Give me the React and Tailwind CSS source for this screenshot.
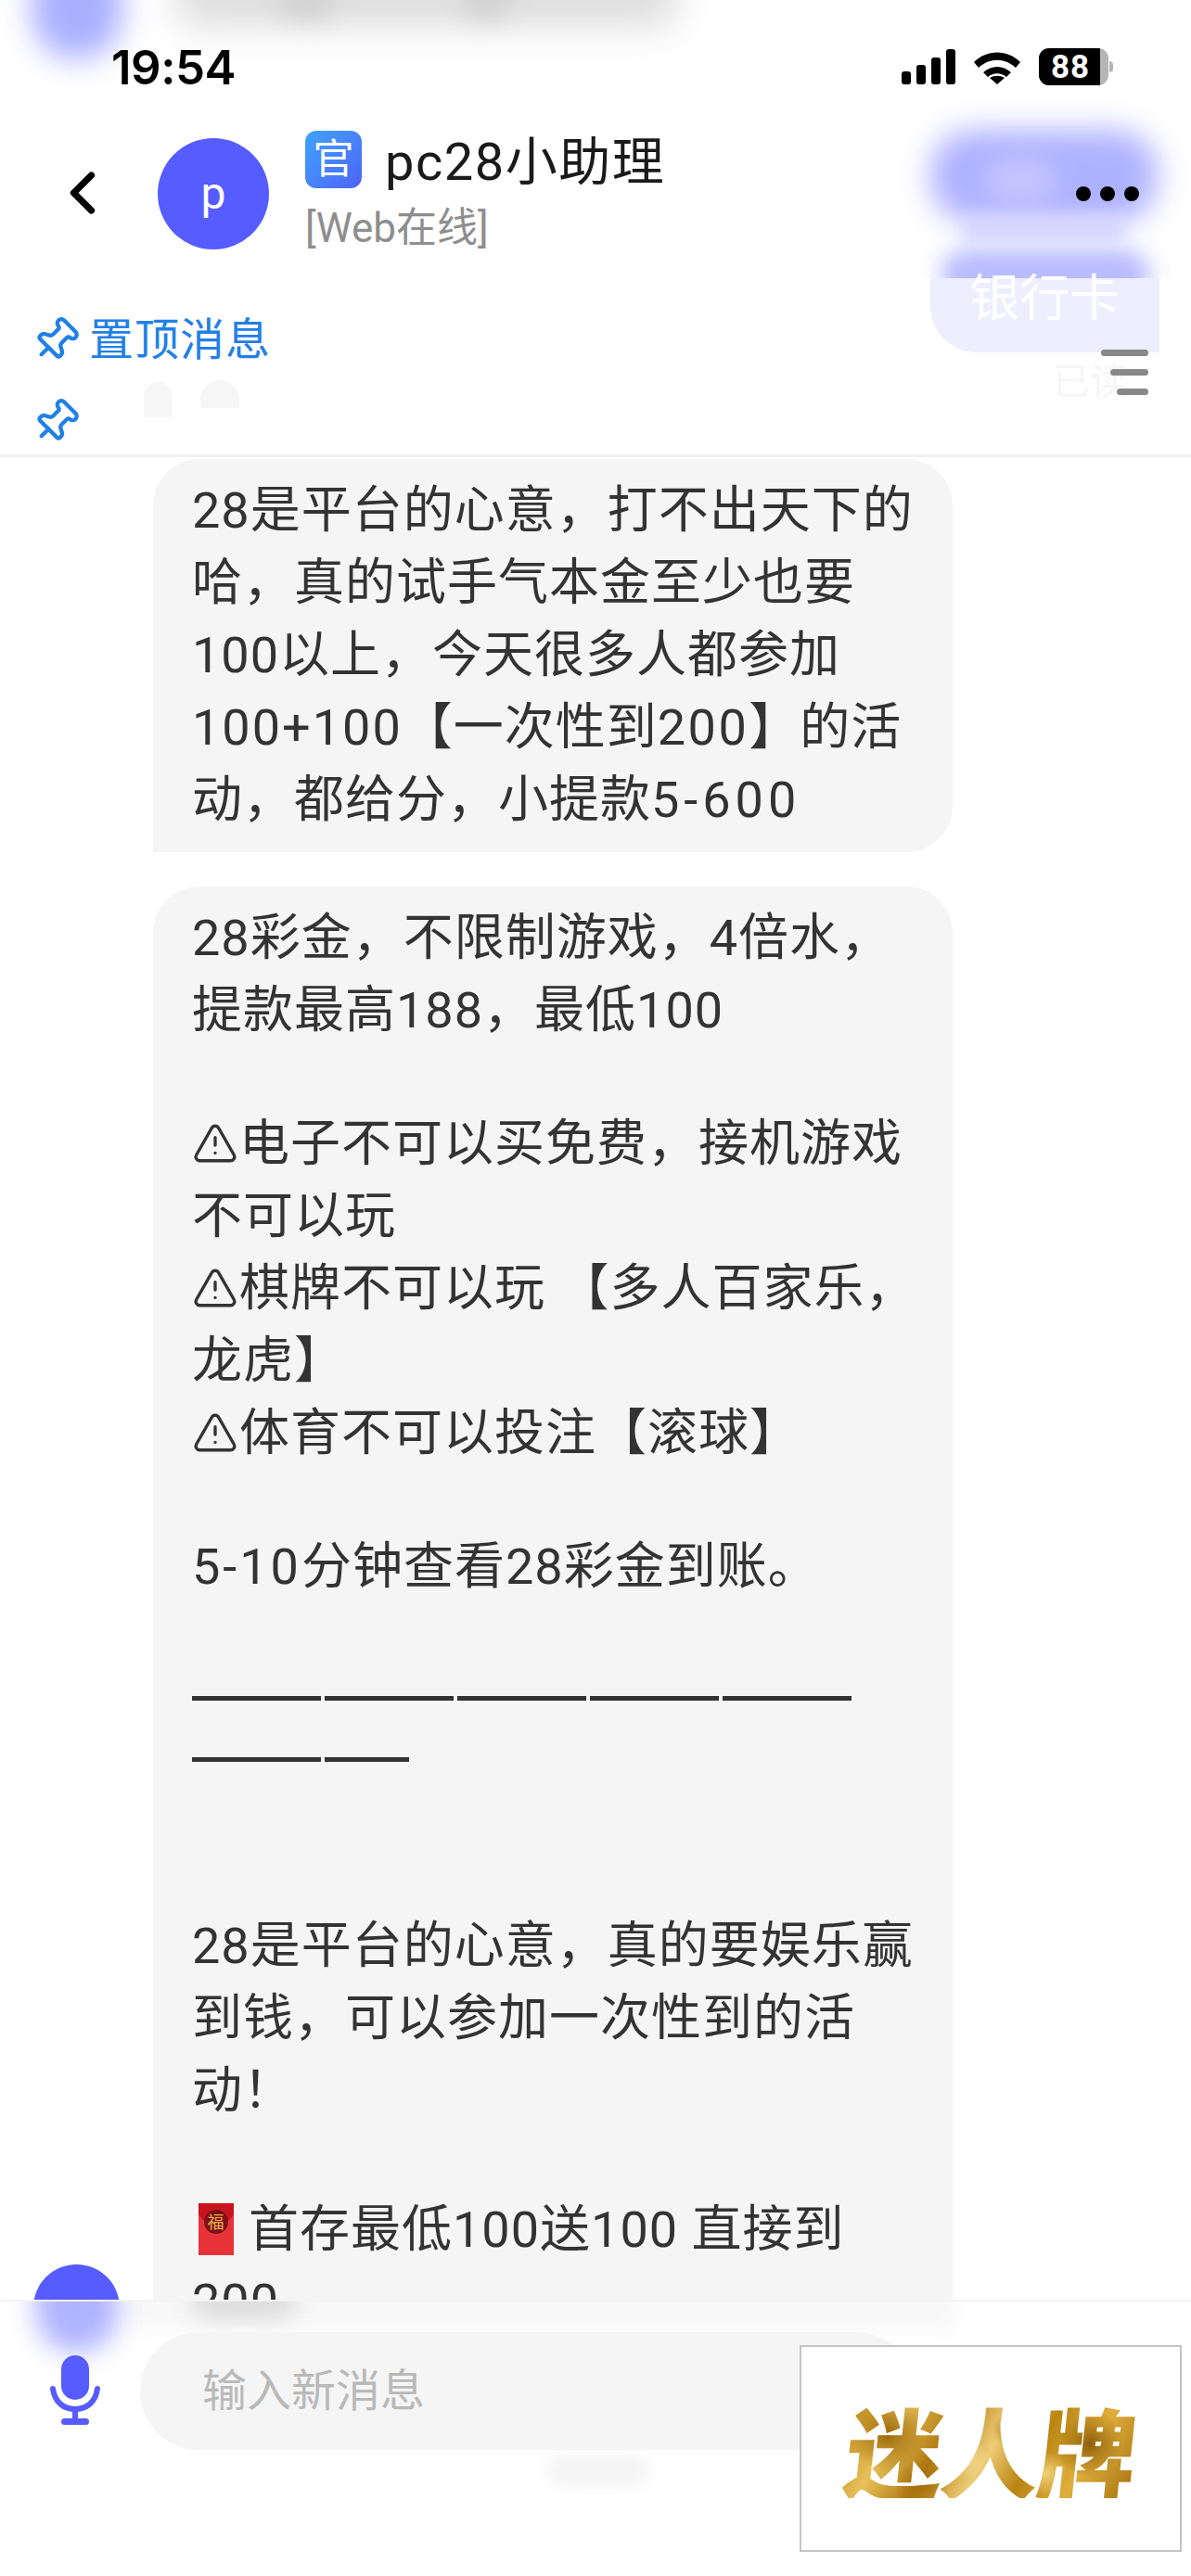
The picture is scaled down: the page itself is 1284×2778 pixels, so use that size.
import React from 'react'
import { ChevronLeft, Pin, TriangleAlert } from 'lucide-react'

const Warning = () => (
    <TriangleAlert size={50} strokeWidth={1.6} className="inline-block align-[-6px] text-[#333] mr-[1px]" />
)

const DashRow = ({ widths, className }) => (
    <div className={`flex items-center gap-[4px] h-[66px] ${className || ''}`}>
        {widths.map((w, i) => (
            <div key={i} className="h-[5px] bg-[#333]" style={{ width: w }} />
        ))}
    </div>
)

const Envelope = () => (
    <svg width="38" height="56" viewBox="0 0 38 56" className="inline-block align-[-9px] mr-[16px] ml-[7px]">
        <rect x="0" y="0" width="38" height="56" fill="#e8323a" />
        <path d="M0 0h38v12c-6 9-13 12-19 12S6 21 0 12z" fill="#c9141f" />
        <circle cx="19" cy="20" r="13" fill="#7c1016" />
        <text x="19" y="27" fontSize="18" textAnchor="middle" fill="#e8b04a">福</text>
    </svg>
)

const SignalBars = () => (
    <div className="flex items-end gap-[6px] h-[38px]">
        <div className="w-[10px] h-[14px] rounded-[3px] bg-black" />
        <div className="w-[10px] h-[21px] rounded-[3px] bg-black" />
        <div className="w-[10px] h-[29px] rounded-[3px] bg-black" />
        <div className="w-[10px] h-[38px] rounded-[3px] bg-black" />
    </div>
)

const Wifi = () => (
    <svg width="50" height="38" viewBox="0 0 50 38">
        <path d="M0 14C14 0 36 0 50 14l-5 6C33 9 17 9 5 20z" fill="#000" />
        <path d="M10 25c9-8 21-8 30 0l-5 5c-6-5-14-5-20 0z" fill="#000" />
        <path d="M17 31c5-3 11-3 16 0l-8 7z" fill="#000" />
    </svg>
)

const Battery = () => (
    <div className="flex items-center gap-[1px]">
        <div className="relative w-[75px] h-[40px] rounded-[11px] bg-[#b5b5b5] overflow-hidden">
            <div className="w-[66px] h-full bg-black flex items-center justify-center text-white font-bold text-[35px] leading-none pl-[2px] tracking-[1px]">
                88
            </div>
        </div>
        <div className="w-[4px] h-[12px] rounded-r-full bg-[#b5b5b5]" />
    </div>
)

const Mic = () => (
    <svg width="56" height="76" viewBox="0 0 56 76">
        <rect x="12" y="0" width="30" height="48" rx="15" fill="#565cff" />
        <path d="M3 36c2 15 12 22 24 22s22-7 24-22" fill="none" stroke="#565cff" strokeWidth="6" strokeLinecap="round" />
        <rect x="24" y="58" width="6" height="12" fill="#565cff" />
        <rect x="12" y="68" width="30" height="7" rx="3.5" fill="#565cff" />
    </svg>
)

const App = () => {
    return (
        <div className="relative w-[1284px] h-[2778px] overflow-hidden bg-white flex flex-col font-['Roboto','Noto_Sans_CJK_SC',sans-serif]">
            <div className="relative h-[300px] shrink-0 overflow-hidden bg-white">
                <div className="absolute left-[34px] -top-[56px] w-[98px] h-[120px] rounded-full bg-[#aab0ff] blur-[16px]" />
                <div className="absolute left-[190px] -top-[34px] w-[540px] h-[62px] rounded-[20px] bg-[#dcdcdc] blur-[20px]" />
                <div className="absolute left-[300px] -top-[20px] w-[60px] h-[40px] rounded-full bg-[#d2d2d2] blur-[12px]" />
                <div className="absolute left-[500px] -top-[20px] w-[50px] h-[40px] rounded-full bg-[#d2d2d2] blur-[12px]" />
                <div className="absolute left-[1003px] top-[140px] w-[245px] h-[100px] rounded-[46px] bg-[#aeb1ff] blur-[16px]" />
                <div className="absolute left-[1060px] top-[170px] w-[80px] h-[50px] rounded-full bg-[#c3c5ff] blur-[14px]" />
                <div className="absolute left-[1014px] top-[268px] w-[226px] h-[60px] rounded-[30px] bg-[#b8bbff] blur-[12px]" />
                <div className="absolute left-[1040px] top-[234px] w-[170px] h-[26px] bg-[#d4d5ff] blur-[8px]" />

                <div className="relative flex flex-col">
                    <div className="flex items-center justify-between h-[38px] mt-[53px] pl-[120px] pr-[82px]">
                        <span className="text-[51px] font-semibold leading-none tracking-[-0.5px] text-black font-['Inter',sans-serif]">19:54</span>
                        <div className="flex items-center gap-[20px] mr-[2px]">
                            <SignalBars />
                            <Wifi />
                            <Battery />
                        </div>
                    </div>

                    <div className="flex items-start mt-[50px]">
                        <ChevronLeft size={76} strokeWidth={2.3} className="text-black ml-[51px] mt-[29px] shrink-0" />
                        <div className="w-[120px] h-[120px] ml-[43px] mt-[8px] rounded-full bg-[#565cff] flex items-center justify-center text-white text-[48px] shrink-0">
                            p
                        </div>
                        <div className="ml-[39px] flex flex-col">
                            <div className="flex items-center">
                                <div className="w-[61px] h-[62px] rounded-[12px] bg-linear-to-br from-[#3fa3ff] to-[#4c63f5] flex items-center justify-center text-white text-[44px] leading-none">
                                    官
                                </div>
                                <span className="ml-[25px] mt-[6px] text-[56px] leading-none tracking-[1.5px] text-[#1a1a1a]">pc28小助理</span>
                            </div>
                            <div className="mt-[18px] text-[44px] leading-[50px] text-[#8e8e8e]">[Web在线]</div>
                        </div>
                        <div className="absolute left-[1160px] top-[201px] flex gap-[10px]">
                            <div className="w-[16px] h-[16px] rounded-full bg-black" />
                            <div className="w-[16px] h-[16px] rounded-full bg-black" />
                            <div className="w-[16px] h-[16px] rounded-full bg-black" />
                        </div>
                    </div>
                </div>
            </div>

            {/* Pinned messages */}
            <div className="relative h-[193px] shrink-0 border-b-[3px] border-[#f0f0f0] pl-[38px]">
                <div className="absolute right-[34px] top-0 w-[247px] h-[80px] rounded-bl-[50px] rounded-br-none bg-[#eeeefe] flex justify-center items-start text-white text-[54px] leading-[46px]">
                    银行卡
                </div>
                <div className="absolute left-[1135px] top-[92px] text-[40px] leading-none text-[#f6f6f6]">已读</div>
                <div className="absolute right-[46px] top-[77px] flex flex-col items-end gap-[14px]">
                    <div className="w-[51px] h-[7px] rounded-full bg-[#888]" />
                    <div className="w-[41px] h-[7px] rounded-full bg-[#888]" />
                    <div className="w-[34px] h-[7px] rounded-full bg-[#888]" />
                </div>
                <div className="absolute left-[155px] top-[112px] w-[30px] h-[38px] rounded-t-full bg-[#f6f6f6]" />
                <div className="absolute left-[216px] top-[110px] w-[42px] h-[30px] rounded-t-full bg-[#f6f6f6]" />

                <div className="flex items-center mt-[42px] h-[50px]">
                    <Pin size={52} strokeWidth={2} className="rotate-45 text-[#2180e6] -ml-[4px]" />
                    <span className="ml-[10px] text-[48px] leading-none tracking-[1px] text-[#2180e6]">置顶消息</span>
                </div>
                <div className="mt-[38px] h-[50px] flex items-center">
                    <Pin size={52} strokeWidth={2} className="rotate-45 text-[#2180e6] -ml-[4px]" />
                </div>
            </div>

            {/* Messages */}
            <div className="relative flex-1 min-h-0 overflow-hidden pl-[165px] text-[54px] leading-[78px] tracking-[1px] text-[#333]">
                <div className="absolute left-[36px] top-[1949px] w-[93px] h-[93px] rounded-full bg-[#565cff]" />

                <div className="w-[862px] mt-[2px] pt-[17px] pb-[17px] pl-[42px] rounded-[50px] rounded-bl-none bg-[#f5f5f5] whitespace-nowrap">
                    <div>28是平台的心意，打不出天下的</div>
                    <div>哈，真的试手气本金至少也要</div>
                    <div>100以上，今天很多人都参加</div>
                    <div><span className="tracking-[2px]">100+100</span>【一次性到<span className="tracking-[2.5px]">200</span>】的活</div>
                    <div>动，都给分，小提款<span className="tracking-[5px]">5-600</span></div>
                </div>

                <div className="w-[862px] mt-[37px] pt-[17px] pb-[60px] pl-[42px] rounded-t-[50px] bg-[#f5f5f5] whitespace-nowrap">
                    <div>28彩金，不限制游戏，4倍水，</div>
                    <div>提款最高188，最低100</div>
                    <div className="mt-[66px]"><Warning />电子不可以买免费，接机游戏</div>
                    <div>不可以玩</div>
                    <div><Warning />棋牌不可以玩 【多人百家乐，</div>
                    <div>龙虎】</div>
                    <div><Warning />体育不可以投注【滚球】</div>
                    <div className="mt-[66px]"><span className="tracking-[3px]">5-10</span>分钟查看28彩金到账。</div>
                    <DashRow widths={[139, 139, 139, 139, 139]} className="mt-[69px]" />
                    <DashRow widths={[139, 91]} />
                    <div className="mt-[130px]">28是平台的心意，真的要娱乐赢</div>
                    <div>到钱，可以参加一次性到的活</div>
                    <div>动！</div>
                    <div className="mt-[72px]"><Envelope />首存最低100送100 直接到</div>
                    <div>200</div>
                </div>
            </div>

            {/* Input bar */}
            <div className="relative h-[298px] shrink-0 border-t-[2px] border-[#f3f3f3] bg-white overflow-hidden">
                <div className="absolute left-[140px] -top-[30px] w-[890px] h-[60px] bg-[#f8f8f8] blur-[10px]" />
                <div className="absolute left-[38px] -top-[50px] w-[90px] h-[105px] rounded-full bg-[#b0b3ff] blur-[14px]" />
                <div className="absolute left-[205px] -top-[26px] w-[115px] h-[46px] rounded-full bg-[#dcdcdc] blur-[12px]" />
                <div className="absolute left-[590px] top-[166px] w-[110px] h-[32px] rounded-full bg-[#f4f4f4] blur-[8px]" />

                <div className="relative flex items-start pt-[33px]">
                    <div className="ml-[54px] mt-[25px] shrink-0"><Mic /></div>
                    <div className="ml-[41px] w-[835px] h-[127px] rounded-full bg-[#f5f5f5] flex items-center pl-[67px] text-[48px] leading-none text-[#b9b9b9]">
                        输入新消息
                    </div>
                </div>

                {/* Watermark */}
                <div className="absolute left-[862px] top-[47px] w-[412px] h-[223px] border-2 border-[#c4c4c4] bg-white flex items-center justify-center">
                    <span className="-skew-x-6 text-[106px] leading-none font-black tracking-[-2px] font-['Noto_Sans_CJK_SC',sans-serif] text-transparent bg-clip-text bg-[radial-gradient(circle_at_14%_35%,#9a6708_0,transparent_14%),radial-gradient(circle_at_42%_60%,#f3dc96_0,transparent_12%),radial-gradient(circle_at_56%_30%,#a8720c_0,transparent_10%),radial-gradient(circle_at_70%_75%,#f0d27a_0,transparent_10%),radial-gradient(circle_at_84%_45%,#8f5f0a_0,transparent_13%),radial-gradient(circle_at_28%_85%,#a56d0c_0,transparent_12%),linear-gradient(115deg,#b98412_0%,#e8c05a_18%,#b07a10_34%,#eecd76_50%,#b98412_64%,#dfae3c_80%,#a97510_100%)]">
                        迷人牌
                    </span>
                </div>
            </div>
        </div>
    )
}

export default App
